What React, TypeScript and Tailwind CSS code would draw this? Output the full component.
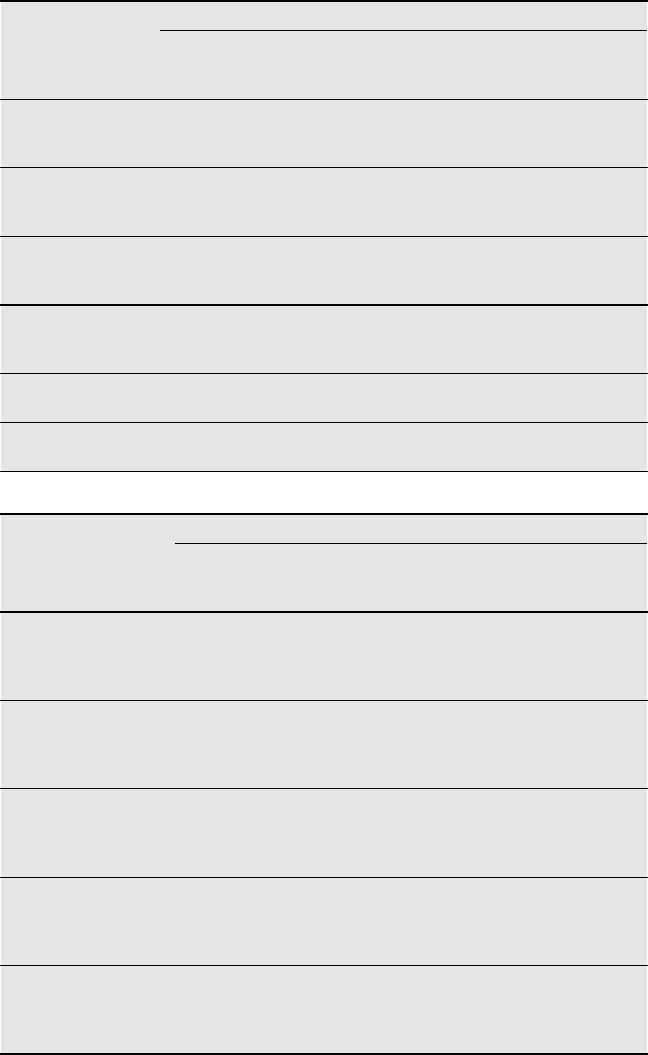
import React from "react";

interface TableProps {
  splitAt: number; // x where the header's group rule starts
  headerLower: number;
  headerRule: string;
  rows: { h: number; rule: string }[];
}

const Cell = ({ h }: { h: number }) => (
  <div className="mx-px bg-[#e5e5e5]" style={{ height: h }} />
);

const Table: React.FC<TableProps> = ({ splitAt, headerLower, headerRule, rows }) => {
  return (
    <div className="w-full border-t-2 border-black">
      {/* === header (two levels) === */}
      <div className={`w-full ${headerRule} border-black`}>
        <div className="mx-px bg-[#e5e5e5]">
          <div className="flex">
            <div className="shrink-0" style={{ width: splitAt - 1 }} />
            <div className="h-[29px] flex-1 border-b border-black" />
          </div>
          <div style={{ height: headerLower }} />
        </div>
      </div>

      {/* === body rows === */}
      {rows.map((r, i) => (
        <div key={i} className={`w-full ${r.rule} border-black`}>
          <Cell h={r.h} />
        </div>
      ))}
    </div>
  );
};

export default function App() {
  return (
    <div className="flex w-[648px] flex-col bg-white">
      <Table
        splitAt={160}
        headerLower={68}
        headerRule="border-b"
        rows={[
          { h: 67, rule: "border-b" },
          { h: 68, rule: "border-b" },
          { h: 67, rule: "border-b-2" },
          { h: 67, rule: "border-b" },
          { h: 48, rule: "border-b" },
          { h: 48, rule: "border-b" },
        ]}
      />
      <div className="h-[41px]" />
      <Table
        splitAt={175}
        headerLower={67}
        headerRule="border-b-2"
        rows={[
          { h: 87, rule: "border-b" },
          { h: 87, rule: "border-b" },
          { h: 88, rule: "border-b" },
          { h: 87, rule: "border-b" },
          { h: 87, rule: "border-b-2" },
        ]}
      />
    </div>
  );
}
